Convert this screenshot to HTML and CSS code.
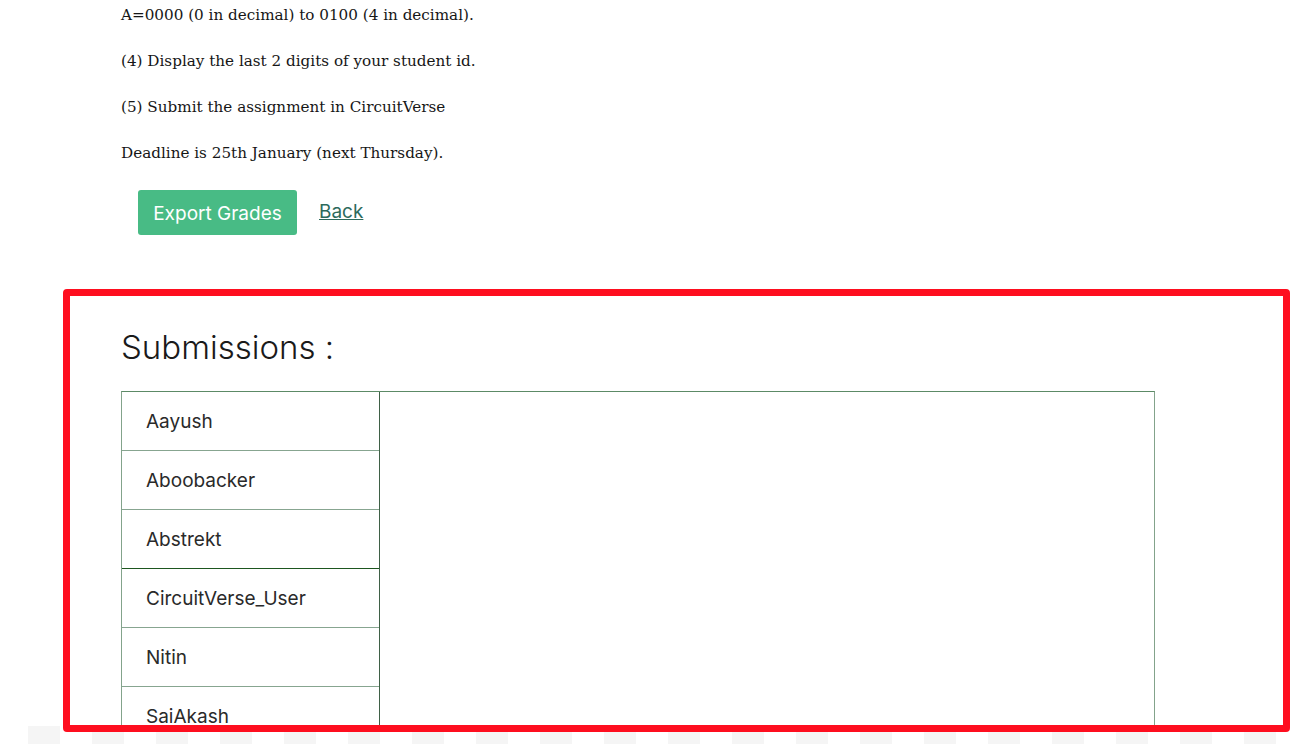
FILE: index.html
```html
<!DOCTYPE html>
<html>
<head>
<meta charset="utf-8">
<link rel="stylesheet" href="styles.css">
</head>
<body>
<div class="page">
  <div class="desc">
    <p>A=0000 (0 in decimal) to 0100 (4 in decimal).</p>
    <p>(4) Display the last 2 digits of your student id.</p>
    <p>(5) Submit the assignment in CircuitVerse</p>
    <p>Deadline is 25th January (next Thursday).</p>
  </div>
  <div class="actions">
    <a class="btn">Export Grades</a>
    <a class="back" href="#">Back</a>
  </div>
  <section class="submissions">
    <h2 class="title">Submissions :</h2>
    <div class="grid">
      <ul class="names">
        <li>Aayush</li>
        <li>Aboobacker</li>
        <li>Abstrekt</li>
        <li class="dark">CircuitVerse_User</li>
        <li>Nitin</li>
        <li>SaiAkash</li>
      </ul>
      <div class="panel"></div>
    </div>
  </section>
</div>
<div class="checker"></div>
<div class="highlight"></div>
</body>
</html>
```
FILE: styles.css
```css
html, body {
  margin: 0;
  padding: 0;
  background: #ffffff;
}
.page {
  height: 726px;
  overflow: hidden;
  background: #fff;
}
.desc {
  padding: 4px 0 26px 121px;
  font-family: "DejaVu Serif", "Liberation Serif", serif;
  font-size: 15.2px;
  color: #161616;
}
.desc p {
  margin: 0 0 24px;
  line-height: 22px;
}
.desc p:last-child {
  margin-bottom: 0;
}
.actions {
  display: flex;
  align-items: center;
  padding-left: 138px;
  gap: 22px;
}
.btn {
  display: inline-flex;
  align-items: center;
  justify-content: center;
  width: 159px;
  height: 45px;
  background: #48bb85;
  border-radius: 3px;
  color: #fff;
  font-family: Inter, "Noto Sans", sans-serif;
  font-size: 19px;
  padding-top: 2px;
  box-sizing: border-box;
}
.back {
  color: #2c6a5c;
  font-family: Inter, "Noto Sans", sans-serif;
  font-size: 19px;
  text-decoration: underline;
  margin-top: -2px;
}
.submissions {
  padding-left: 121px;
  margin-top: 91px;
}
.title {
  margin: 0 0 23px;
  font-family: Inter, "Noto Sans", sans-serif;
  font-weight: 300;
  font-size: 33px;
  line-height: 42px;
  color: #1a1a1a;
}
.grid {
  display: flex;
  width: 1034px;
  box-sizing: border-box;
  border: 1px solid #83a38b;
  border-top-color: #5c8a66;
}
.names {
  list-style: none;
  margin: 0;
  padding: 0;
  width: 257px;
  border-right: 1px solid #3f6046;
}
.names li {
  height: 58px;
  display: flex;
  align-items: center;
  padding-left: 24px;
  border-bottom: 1px solid #87a590;
  font-family: Inter, "Noto Sans", sans-serif;
  font-size: 19px;
  color: #2a2a2a;
}
.names li.dark {
  border-top: 1px solid #1d561f;
  margin-top: -1px;
}
.panel {
  flex: 1;
}
.checker {
  height: 18px;
  background: repeating-linear-gradient(90deg, #ffffff 0 28px, #f5f5f5 28px 60px, #ffffff 60px 64px);
}
.highlight {
  position: absolute;
  left: 63px;
  top: 289px;
  width: 1227px;
  height: 443px;
  box-sizing: border-box;
  border: 7px solid #fe0e1f;
  border-radius: 4px;
}
```
